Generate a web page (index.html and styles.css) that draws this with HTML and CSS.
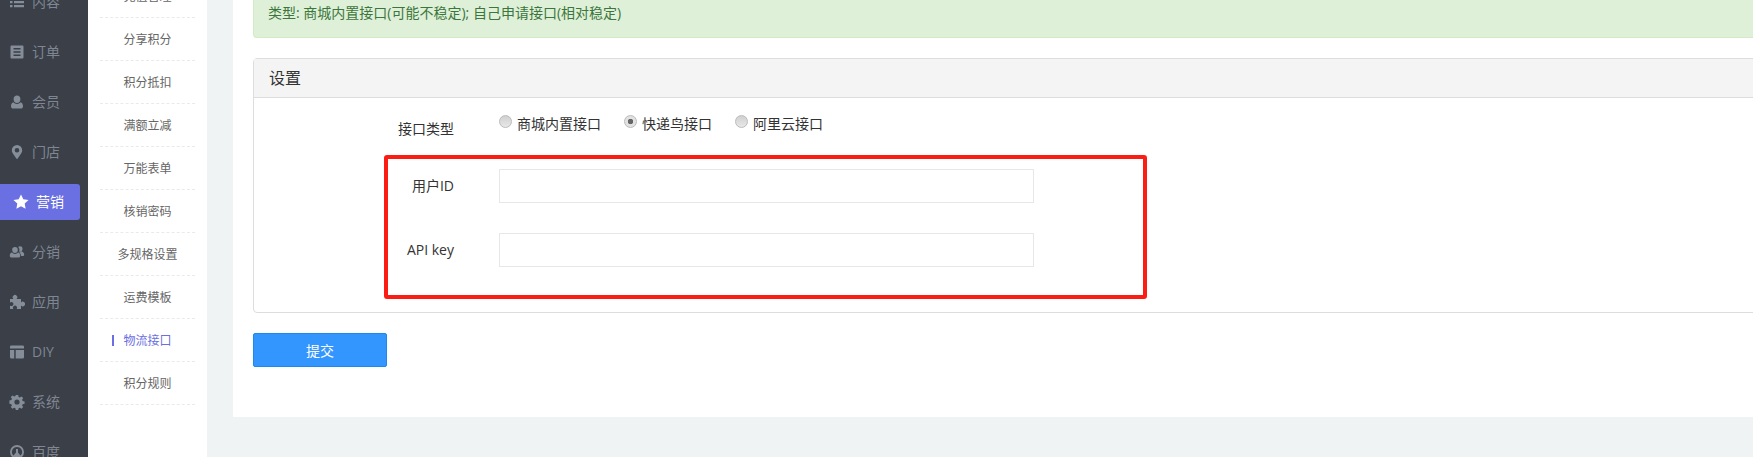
FILE: index.html
```html
<!DOCTYPE html>
<html lang="zh-CN">
<head>
    <meta charset="UTF-8">
    <meta name="viewport" content="width=device-width, initial-scale=1.0">
    <title>物流接口</title>
    <link rel="stylesheet" href="styles.css">
</head>
<body>
    <div class="page">
        <nav class="rail">
            <a class="rail-item"><svg class="icon" viewBox="0 0 16 16"><path d="M1 3h2.500v2.200H1zM5 3h10v2.200H5zM1 7h2.500v2.200H1zM5 7h10v2.200H5zM1 11h2.500v2.200H1zM5 11h10v2.200H5z"/></svg>内容</a>
            <a class="rail-item"><svg class="icon" viewBox="0 0 16 16"><path fill-rule="evenodd" d="M2.500 1.500h11a1 1 0 0 1 1 1v11a1 1 0 0 1-1 1h-11a1 1 0 0 1-1-1v-11a1 1 0 0 1 1-1zM4.500 4v1.600h7V4zM4.500 7.200v1.600h7V7.200zM4.500 10.400V12h7v-1.600z"/></svg>订单</a>
            <a class="rail-item"><svg class="icon" viewBox="0 0 16 16"><path d="M8 1.500a3.400 3.400 0 0 1 3.400 3.700c0 2-1.400 3.800-3.400 3.800S4.600 7.200 4.600 5.200A3.400 3.400 0 0 1 8 1.500zM4.500 8.300C5.300 9.500 6.500 10 8 10s2.700-.5 3.500-1.700c1.500.3 2.500 1.700 2.500 3.900 0 1.500-.9 2.300-2.200 2.300H4.200C2.900 14.500 2 13.700 2 12.200c0-2.200 1-3.600 2.500-3.900z"/></svg>会员</a>
            <a class="rail-item"><svg class="icon" viewBox="0 0 16 16"><path fill-rule="evenodd" d="M8 1a5.200 5.200 0 0 1 5.200 5.200c0 1.300-.4 2.100-.9 3.100L8.700 14.500a.8.800 0 0 1-1.400 0L3.700 9.300c-.5-1-.9-1.800-.9-3.100A5.200 5.200 0 0 1 8 1zm0 3a2.300 2.300 0 1 0 0 4.600A2.300 2.300 0 0 0 8 4z"/></svg>门店</a>
            <a class="rail-item is-active"><span class="rail-pill"><svg class="icon" viewBox="0 0 16 16"><path d="M8 .5l2.300 4.800 5.200.7-3.800 3.600.9 5.200L8 12.300l-4.600 2.500.9-5.200L.5 6l5.200-.7z"/></svg>营销</span></a>
            <a class="rail-item"><svg class="icon" viewBox="0 0 16 16"><path d="M6 3a2.800 2.800 0 0 1 2.800 3c0 1.700-1.200 3-2.800 3S3.200 7.700 3.200 6A2.800 2.800 0 0 1 6 3zM3 8.500C3.700 9.400 4.800 9.900 6 9.900s2.300-.5 3-1.400c1.400.2 2.200 1.500 2.200 3.200 0 1.100-.7 1.800-1.700 1.800H2.500c-1 0-1.700-.7-1.700-1.800 0-1.700.8-3 2.200-3.200zM11 2.200a2.500 2.500 0 0 1 2.500 2.700c0 1.500-1 2.900-2.500 2.900-.4 0-.7-.1-1-.2.300-.5.400-1.100.4-1.700 0-1.200-.5-2.300-1.300-3 .5-.4 1.200-.7 1.900-.7zM12.300 7.500c1.500.1 2.900 1.300 2.900 3 0 1-.6 1.600-1.500 1.600h-1.600c-.1-1.500-.8-2.800-2-3.500.9 0 1.700-.4 2.200-1.100z"/></svg>分销</a>
            <a class="rail-item"><svg class="icon" viewBox="0 0 16 16"><path d="M1 5H4.500a2.300 2.300 0 1 1 3 0H12V8.500a2.300 2.300 0 1 1 0 3V15H7.500a2 2 0 1 0-3 0H1V11.500a2 2 0 1 0 0-3z"/></svg>应用</a>
            <a class="rail-item"><svg class="icon" viewBox="0 0 16 16"><path d="M1 2.800A1.300 1.300 0 0 1 2.300 1.500h11.400A1.300 1.300 0 0 1 15 2.800v1.700H1zM1 6h4.200v8.500H2.300A1.300 1.300 0 0 1 1 13.200zM6.700 6H15v7.200a1.300 1.300 0 0 1-1.300 1.300h-7z"/></svg>DIY</a>
            <a class="rail-item"><svg class="icon" viewBox="0 0 16 16"><path fill-rule="evenodd" d="M6.800 1h2.400l.4 2 1.200.5 1.700-1.100 1.700 1.700-1.100 1.700.5 1.200 2 .4v2.400l-2 .4-.5 1.200 1.100 1.700-1.700 1.700-1.700-1.100-1.200.5-.4 2H6.800l-.4-2-1.200-.5-1.700 1.100-1.700-1.700 1.100-1.700-.5-1.200-2-.4V6.400l2-.4.500-1.200-1.100-1.700 1.700-1.700 1.700 1.100 1.200-.5zM8 5.400a2.600 2.600 0 1 0 0 5.200 2.600 2.600 0 0 0 0-5.200z"/></svg>系统</a>
            <a class="rail-item"><svg class="icon" viewBox="0 0 16 16"><path fill-rule="evenodd" d="M8 1a7 7 0 1 1 0 14A7 7 0 0 1 8 1zm0 2a5 5 0 0 0-3.500 8.600L7 8.500V5h2v3.500l2.500 3.100A5 5 0 0 0 8 3z"/></svg>百度</a>
        </nav>

        <ul class="submenu">
            <li>充值管理</li>
            <li>分享积分</li>
            <li>积分抵扣</li>
            <li>满额立减</li>
            <li>万能表单</li>
            <li>核销密码</li>
            <li>多规格设置</li>
            <li>运费模板</li>
            <li class="is-current">物流接口</li>
            <li>积分规则</li>
        </ul>

        <main class="main">
            <div class="content">
                <div class="alert">类型: 商城内置接口(可能不稳定); 自己申请接口(相对稳定)</div>

                <form>
                    <div class="panel">
                        <div class="panel-heading">设置</div>
                        <div class="panel-body">
                            <div class="type-row">
                                <label class="row-label type-label">接口类型</label>
                                <div class="radios">
                                    <label class="radio"><input type="radio" name="type">商城内置接口</label>
                                    <label class="radio"><input type="radio" name="type" checked>快递鸟接口</label>
                                    <label class="radio"><input type="radio" name="type">阿里云接口</label>
                                </div>
                            </div>
                            <div class="red-box">
                                <div class="field-row">
                                    <label class="row-label" for="uid">用户ID</label>
                                    <input class="text-input" type="text" id="uid">
                                </div>
                                <div class="field-row">
                                    <label class="row-label" for="apikey">API key</label>
                                    <input class="text-input" type="text" id="apikey">
                                </div>
                            </div>
                        </div>
                    </div>
                    <button class="submit-btn" type="submit">提交</button>
                </form>
            </div>
        </main>
    </div>
</body>
</html>
```

FILE: styles.css
```css
* {
    box-sizing: border-box;
}
html, body {
    margin: 0;
    height: 100%;
    overflow: hidden;
}
body {
    font-family: "Open Sans", "Noto Sans CJK SC", sans-serif;
    font-size: 14px;
    color: #333;
    background: #eff3f4;
}
.page {
    display: flex;
    height: 457px;
    overflow: hidden;
}

/* left rail */
.rail {
    flex: 0 0 88px;
    background: #3a3f48;
    height: 457px;
    overflow: hidden;
}
.rail-item {
    display: flex;
    align-items: center;
    height: 50px;
    padding-left: 9px;
    color: #7f8691;
    font-size: 14px;
    line-height: 20px;
}
.rail-item:first-child {
    margin-top: -23px;
}
.rail-item .icon {
    width: 16px;
    height: 16px;
    margin-right: 7px;
    fill: #858d98;
}
.rail-item.is-active {
    padding-left: 0;
}
.rail-pill {
    display: flex;
    align-items: center;
    width: 80px;
    height: 36px;
    padding-left: 13px;
    color: #fff;
    background: #6a70e2;
    border-radius: 0 3px 3px 0;
}
.rail-pill .icon {
    fill: #fff;
}

/* second column */
.submenu {
    flex: 0 0 119px;
    margin: 0;
    padding: 0 12px;
    list-style: none;
    background: #fff;
    font-size: 12px;
    color: #666;
}
.submenu li {
    height: 43px;
    line-height: 44px;
    text-align: center;
    border-bottom: 1px dashed #e8eaec;
}
.submenu li:first-child {
    margin-top: -25px;
}
.submenu li.is-current {
    position: relative;
    color: #6a70e2;
}
.submenu li.is-current::before {
    content: "";
    position: absolute;
    left: 12px;
    top: 16px;
    width: 2px;
    height: 11px;
    background: #6a70e2;
}

/* main area */
.main {
    flex: 1;
    padding-left: 26px;
    min-width: 0;
}
.content {
    height: 417px;
    padding-left: 20px;
    background: #fff;
    overflow: hidden;
}
.alert {
    height: 38px;
    padding: 3px 15px 0 14px;
    line-height: 20px;
    color: #3c763d;
    background: #dff0d8;
    border-bottom: 1px solid #d6e9c6;
    border-left: 1px solid #d6e9c6;
    border-radius: 0 0 0 4px;
    margin-right: -10px;
}
.panel {
    margin-top: 20px;
    margin-right: -10px;
    height: 255px;
    border: 1px solid #ddd;
    border-radius: 4px;
}
.panel-heading {
    height: 39px;
    padding-left: 15px;
    font-size: 16px;
    line-height: 38px;
    background: #f4f4f4;
    border-bottom: 1px solid #ddd;
}
.panel-body {
    padding-left: 130px;
}
.type-row {
    display: flex;
    height: 57px;
    padding-top: 16px;
}
.row-label {
    flex: 0 0 100px;
    text-align: right;
    padding-right: 30px;
    line-height: 20px;
}
.type-label {
    margin-top: 5px;
    margin-left: 1px;
    padding-right: 31px;
}
.radios {
    display: flex;
    margin-left: 14px;
}
.radio {
    display: flex;
    align-items: center;
    height: 20px;
    margin-right: 23px;
    line-height: 20px;
}
.radio input {
    appearance: none;
    width: 13px;
    height: 13px;
    margin: -5px 5px 0 0;
    border: 1px solid #bbb;
    border-radius: 50%;
    background: linear-gradient(#d0d0d0, #e8e8e8);
}
.radio input:checked {
    background: radial-gradient(circle, #666 0 2.5px, #e2e2e2 3px);
}
.red-box {
    width: 763px;
    height: 144px;
    padding-top: 10px;
    border: 4px solid #fb1d13;
    border-radius: 3px;
}
.field-row {
    display: flex;
    align-items: flex-start;
    height: 64px;
}
.field-row .row-label {
    flex: 0 0 66px;
    padding-right: 0;
    margin-top: 7px;
}
.text-input {
    width: 535px;
    height: 34px;
    margin-left: 45px;
    padding: 6px 12px;
    border: 1px solid #e7e7e7;
    background: #fff;
    outline: none;
}
.submit-btn {
    display: block;
    width: 134px;
    height: 34px;
    margin-top: 20px;
    padding: 0;
    font: inherit;
    color: #fff;
    background: #3396ff;
    border: 1px solid #1e87f0;
    border-radius: 2px;
}
```
